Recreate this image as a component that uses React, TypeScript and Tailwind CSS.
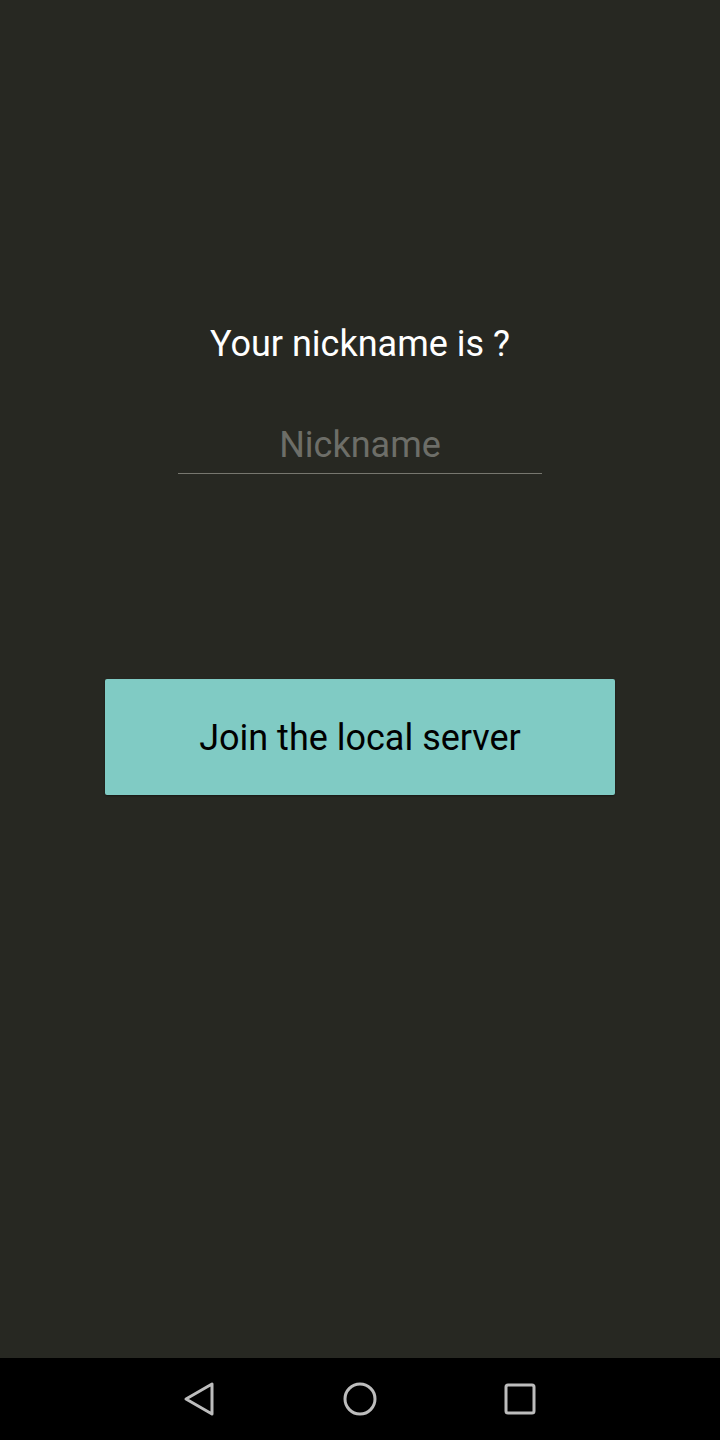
const App = () => {
  return (
    <div className="w-[720px] h-[1440px] flex flex-col bg-[#272822] [font-family:Roboto,'Liberation_Sans',sans-serif]">
      <main className="flex-1 flex flex-col items-center">
        <h1 className="mt-[321px] text-[36px] leading-[46px] text-white">
          Your nickname is ?
        </h1>
        <div className="mt-[49px] w-[364px] border-b border-[#77776f]">
          <input
            placeholder="Nickname"
            className="w-full h-[57px] pb-0 bg-transparent text-center text-[36px] text-white placeholder:text-[#6d6e68] outline-none"
          />
        </div>
        <button className="mt-[205px] w-[510px] h-[116px] pt-[2px] rounded-[2px] bg-[#80cbc4] text-[36px] text-black shadow-[0_1px_2px_rgba(0,0,0,0.4)]">
          Join the local server
        </button>
      </main>
      <nav className="h-[82px] bg-black flex items-center justify-center gap-[116px] text-[#bdbdbd]">
        <svg width="44" height="44" viewBox="0 0 44 44" fill="none" stroke="currentColor" strokeWidth="3" strokeLinejoin="round">
          <path d="M34 7 L34 37 L8 22 Z" />
        </svg>
        <svg width="44" height="44" viewBox="0 0 44 44" fill="none" stroke="currentColor" strokeWidth="3">
          <circle cx="22" cy="22" r="15" />
        </svg>
        <svg width="44" height="44" viewBox="0 0 44 44" fill="none" stroke="currentColor" strokeWidth="3" strokeLinejoin="round">
          <rect x="8" y="8" width="28" height="28" rx="2" />
        </svg>
      </nav>
    </div>
  );
};

export default App;
